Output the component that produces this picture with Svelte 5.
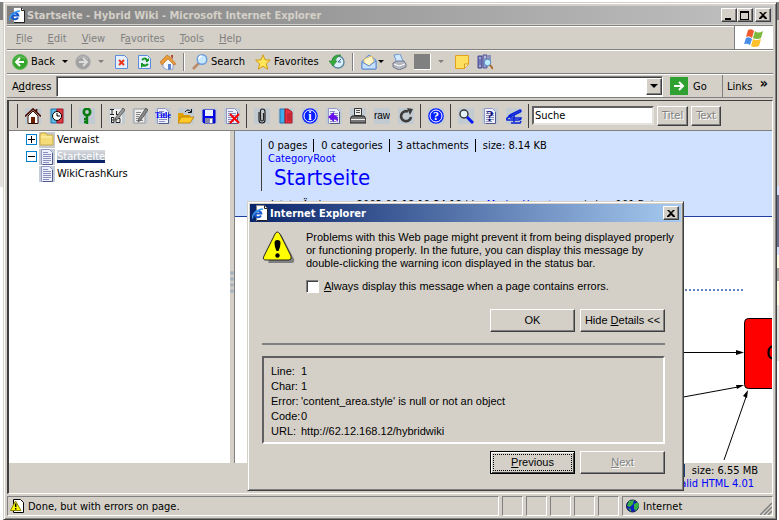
<script>
    let search = $state('Suche');
    let address = $state('');
    let always = $state(false);

    // [before, accelerator, after]
    const menus = [
        ['', 'F', 'ile'],
        ['', 'E', 'dit'],
        ['', 'V', 'iew'],
        ['F', 'a', 'vorites'],
        ['', 'T', 'ools'],
        ['', 'H', 'elp']
    ];

    const tools = [
        ['house', 'clock'],
        ['key'],
        ['ident', 'edit', 'title', 'open', 'save', 'remove'],
        ['clip', 'book', 'info', 'undo', 'print', 'raw', 'reload'],
        ['help'],
        ['find', 'what', 'sign']
    ];

    const details = [
        ['Line:', '1'],
        ['Char:', '1'],
        ['Error:', "'content_area.style' is null or not an object"],
        ['Code:', '0'],
        ['URL:', 'http://62.12.168.12/hybridwiki']
    ];
</script>

{#snippet page()}
    <path d="M2.500 .5h8l3 3v12h-11z" fill="#eef0ff" stroke="#9298c4" />
    <path d="M13.500 4v11.500H4" stroke="#50588c" fill="none" />
    <path d="M4 3.500h5M4 5.500h8M4 7.500h8M4 9.500h8M4 11.500h8M4 13.500h6" stroke="#8a90bc" fill="none" />
{/snippet}

{#snippet icon(name)}
    <svg class="icon" width="16" height="16" viewBox="0 0 16 16" aria-hidden="true">
        {#if name === 'ie'}
            <path d="M4.500 .5h8l3 3v12h-11z" fill="#fff" stroke="#888" />
            <path d="M12.500 .5v3h3v12H5" fill="none" stroke="#222" />
            <path d="M9 10.500A3.300 3.300 0 1 1 9.300 8.500H3.500" fill="none" stroke="#1558d0" stroke-width="2" />
            <path d="M1 13.500C-1 10 5 4 11 4" fill="none" stroke="#3c9cf0" stroke-width="1.300" />
        {:else if name === 'back' || name === 'forward'}
            <circle cx="8" cy="8" r="7.500" fill={name === 'back' ? '#35a52c' : '#a0a0a0'} stroke={name === 'back' ? '#64b85a' : '#bbb'} />
            <path d="M3 5a6 5 0 0 1 10 0" fill="none" stroke="#fff" opacity=".35" />
            <path d={name === 'back' ? 'M8 4L4 8l4 4M4 8h8' : 'M8 4l4 4-4 4M12 8H4'} fill="none" stroke={name === 'back' ? '#fff' : '#ddd'} stroke-width="2" />
        {:else if name === 'stop'}
            <path d="M1.500 1.500h9l3 3v10h-12z" fill="#e4efff" stroke="#5c8cdc" />
            <path d="M5 6l5 5M10 6l-5 5" stroke="#e83418" stroke-width="2" />
        {:else if name === 'refresh'}
            <path d="M1.500 1.500h9l3 3v10h-12z" fill="#e4efff" stroke="#5c8cdc" />
            <path d="M5 6q3-3 5 0v2M11 10q-3 3-6 1V9" stroke="#169425" stroke-width="2" fill="none" />
            <path d="M8 7h4v-3zM4 10v4l4-4z" fill="#169425" />
        {:else if name === 'home'}
            <path d="M3 8l5-5 5 5v7l-6 1-4-3z" fill="#f6f8ff" stroke="#8d9bc8" />
            <path d="M0 8l7-7 3 2 6 7-2 1-6-6-6 6z" fill="#e99b38" stroke="#b86a1c" stroke-width=".6" />
            <path d="M11 1h2v4l-2-2z" fill="#b44a28" /><path d="M8 10h3v5l-3 1z" fill="#5c87d0" />
        {:else if name === 'search'}
            <path d="M1 15l6-6" stroke="#b98b68" stroke-width="2.500" />
            <circle cx="10" cy="5.500" r="4.800" fill="#c8e8ff" stroke="#6a9bda" stroke-width="1.400" />
            <path d="M7 5a3 3 0 0 1 3-3" stroke="#fff" stroke-width="1.500" fill="none" />
        {:else if name === 'star'}
            <path d="M8 .8l2 5 5.300.4-4 3.500 1.400 5.500L8 12.300l-4.700 2.900 1.300-5.500-4-3.500L6 5.800z" fill="#ffe55a" stroke="#d39a10" />
        {:else if name === 'history'}
            <circle cx="9" cy="8" r="6" fill="#d9f0fa" stroke="#5e8698" stroke-width="1.400" />
            <path d="M9 8l3-3M9 8h3" stroke="#3d6890" />
            <path d="M12 1Q4 0 3 7H0l4 5 4-5H6q1-4 6-6z" fill="#35ac3c" stroke="#1f7c2c" stroke-width=".6" />
        {:else if name === 'mail'}
            <path d="M1 7l7-6 7 5v9H1z" fill="#a9cdf6" stroke="#5d8bd0" />
            <path d="M3 5l8-3 2 6-5 4-5-3z" fill="#fff4c8" stroke="#e0b968" />
            <path d="M1 8l7 4 7-5v8H1z" fill="#c6e0ff" stroke="#5d8bd0" />
        {:else if name === 'printer'}
            <path d="M3 1l6-1 3 7-6 2z" fill="#d2e8ff" stroke="#6a98d4" />
            <path d="M2 9l4-2h7l2 3v3l-7 3-6-3z" fill="#b4b7c0" stroke="#74788c" />
            <path d="M3 10l5 2 6-2" stroke="#fff" fill="none" />
        {:else if name === 'note'}
            <path d="M1.500 1.500h13v9l-4 4h-9z" fill="#ffdf60" stroke="#e2a21e" />
            <path d="M10.500 14v-4h4" fill="#fff0ae" stroke="#d89a1a" />
        {:else if name === 'research'}
            <path d="M1 2h4v12H1z" fill="#7378b8" stroke="#464b90" /><path d="M6 1h4v13H6z" fill="#9397cc" stroke="#565b9c" />
            <path d="M2 4h2M7 3h2M2 12h2" stroke="#ddd" /><path d="M11 1h3v8h-3z" fill="#8b91bd" />
            <circle cx="10.500" cy="8.500" r="3.300" fill="#bceaff" stroke="#548cc0" /><path d="M13 11l3 4" stroke="#a86a28" stroke-width="2" />
        {:else if name === 'go'}
            <path d="M0 0h16v16H0z" fill="#2fa032" />
            <path d="M3 8h9M8 4l4 4-4 4" fill="none" stroke="#fff" stroke-width="2" />
        {:else if name === 'warnpage'}
            <path d="M3.500 1.500h7l3 3v10h-10z" fill="#fff" stroke="#000" />
            <path d="M5.500 3l5.500 9.500H.5z" fill="#ff0" stroke="#8a8400" /><path d="M5.700 5.500v3.500M5.700 10v1.500" stroke="#000" stroke-width="1.500" />
        {:else if name === 'globe'}
            <circle cx="7.500" cy="8" r="6" fill="#1020c0" stroke="#101840" />
            <path d="M4 3l5-1-1 4-3 3-3-1zM9 6l4-2 1 4-3 5-2-2zM3 10l3 1 0 3z" fill="#38b044" />
        {:else if name === 'folder'}
            <path d="M0 0h16v16H0z" fill="#c8ccd0" />
            <path d="M1 3l1-2h5l1 2h6v10H1z" fill="#f4dd79" stroke="#c9a94a" /><path d="M2 5h11" stroke="#fff6bd" />
        {:else if name === 'doc'}
            <path d="M0 0h16v16H0z" fill="#c5cdd6" />
            {@render page()}
        {:else}
            <path d="M0 0h16v16H0z" fill="#c3cbd2" />
            {#if name === 'house'}
                <path d="M3 8v7.500h10V8L8 3z" fill="#fff" stroke="#301000" />
                <path d="M0 8.500L8 1l8 7.500M11.500 1v4" fill="none" stroke="#501000" stroke-width="1.700" /><path d="M6 9h4v6H6z" fill="#6b2000" />
            {:else if name === 'clock'}
                <path d="M2 1h6v14H2z" fill="#59b8e8" stroke="#2878a0" /><path d="M8 1h6v14H8z" fill="#e03840" stroke="#a01820" />
                <circle cx="8" cy="8" r="4.500" fill="#fff" stroke="#000" /><path d="M8 5v3h3" stroke="#000" fill="none" />
            {:else if name === 'key'}
                <circle cx="8" cy="4" r="3.200" fill="none" stroke="#087c10" stroke-width="2.600" />
                <path d="M8 7v9M8 11h-3M8 14h-3" stroke="#087c10" stroke-width="2.400" />
            {:else if name === 'ident'}
                <path d="M1 1h12v14H1z" fill="#eee" />
                <path d="M1 1.500h4M3 2v5M1 6.500h4M7.500 7V3M7 6.500h4M2.500 9v5M2 9.500h3v5H2M7 10.500h4v4H7zM2 12h3" stroke="#222" fill="none" />
                <path d="M14 0l2 2-7 9-3 1 1-3z" fill="#999" stroke="#444" stroke-width=".7" />
            {:else if name === 'edit'}
                <path d="M2 1h11v14H2z" fill="#eee" stroke="#999" /><path d="M4 4.500h5M4 6.500h4M4 8.500h3M4 10.500h3M4 12.500h7" stroke="#888" />
                <path d="M14 0l2 2-7 10-3 2 1-4z" fill="#888" stroke="#444" stroke-width=".7" />
            {:else if name === 'title'}
                {@render page()}
                <text x="0" y="10" class="tag-serif">Title</text>
            {:else if name === 'open'}
                <path d="M0 14V5h5l1 2h6v7z" fill="#e0a000" /><path d="M0 15l3-6h13l-4 6z" fill="#ffc928" stroke="#b87800" stroke-width=".8" />
                <path d="M7 4q3-4 6 0M13.500 1v3.500H10" stroke="#111" fill="none" />
            {:else if name === 'save'}
                <path d="M2 2h12v13H3l-1-1z" fill="#0008f0" stroke="#0000b8" /><path d="M4 2h8v6H4z" fill="#eaf1ff" />
                <path d="M4 10h8v5H4z" fill="#88a" /><path d="M9 11h2v4H9z" fill="#fff" />
            {:else if name === 'remove'}
                {@render page()}
                <path d="M6 6l9 9M15 6l-9 9" stroke="#f00" stroke-width="2" />
            {:else if name === 'clip'}
                <path d="M5 4v8q0 3 3 3t3-3V4q0-3-2.500-3T6.500 4v7q0 2 1.500 2t1.500-2V5" fill="none" stroke="#222" stroke-width="1.200" />
            {:else if name === 'book'}
                <path d="M2 1h5v14H2z" fill="#3faef0" stroke="#2c72a0" /><path d="M7 1h3l4 3v11H7z" fill="#e83040" stroke="#a01820" />
                <path d="M9 6h4M9 8h4M9 10h4M9 12h4" stroke="#a81830" />
            {:else if name === 'info' || name === 'help'}
                <circle cx="8" cy="8" r="7.800" fill="#0820ff" /><circle cx="8" cy="8" r="6" fill="none" stroke="#fff" />
                <text x="8" y="12" class="mark" fill="#fff">{name === 'info' ? 'i' : '?'}</text>
            {:else if name === 'undo'}
                {@render page()}
                <path d="M2 9l6-5v3q6 1 3 8 0-4-3-4v3z" fill="#6a10f0" />
            {:else if name === 'print'}
                <path d="M4.500 .5h7v7h-7z" fill="#eee" stroke="#333" /><path d="M6 2.500h4M6 4.500h4" stroke="#555" />
                <path d="M2 8h12l2 3v4H0v-4z" fill="#777" stroke="#222" /><path d="M1 11.500h14" stroke="#eee" />
            {:else if name === 'raw'}
                <text x="8" y="11" class="tag">raw</text>
            {:else if name === 'reload'}
                <path d="M13 9a5 5 0 1 1-3-5.500" fill="none" stroke="#3c3c3c" stroke-width="2.600" /><path d="M9 0l6 1-3 6z" fill="#3c3c3c" />
            {:else if name === 'find'}
                <circle cx="6" cy="6" r="4" fill="#e4f1fb" stroke="#333" stroke-width="1.400" /><path d="M9 9l6 6" stroke="#0818f0" stroke-width="3" />
            {:else if name === 'what'}
                {@render page()}
                <text x="8" y="13" class="mark big" fill="#101080">?</text>
            {:else if name === 'sign'}
                <path d="M5 6.500l9-4.500q2 1 0 2L4 9q-3 0 1-2.500z" fill="none" stroke="#0820d8" stroke-width="1.500" />
                <path d="M3 9q-3 1-2 3h11q3 0 3-2H4M8 7v7M5 15h9l1-2" fill="none" stroke="#0820d8" stroke-width="1.500" />
            {/if}
        {/if}
    </svg>
{/snippet}

<div class="desktop">
    <main class="window">
        <header class="titlebar">
            {@render icon('ie')}
            <h1>Startseite - Hybrid Wiki - Microsoft Internet Explorer</h1>
            <button class="cap" aria-label="Minimize"><svg width="10" height="9"><path d="M1 7h6v2H1z" /></svg></button>
            <button class="cap" aria-label="Maximize"><svg width="10" height="9"><path d="M0 0h9v9H0zM1 2v6h7V2z" fill-rule="evenodd" /></svg></button>
            <button class="cap last" aria-label="Close"><svg width="10" height="9"><path d="M1 1h2l2 2 2-2h2L6 4l3 3v1H7L5 6 3 8H1V7l3-3z" /></svg></button>
        </header>

        <div class="menurow">
            <nav class="menubar">
                {#each menus as [pre, key, post]}
                    <button>{pre}<u>{key}</u>{post}</button>
                {/each}
            </nav>
            <div class="flag">
                <svg width="20" height="18" viewBox="0 0 20 18" aria-hidden="true">
                    <path d="M4 1q4-2 6 1L8 9Q5 6 2 8z" fill="#ee5a2c" /><path d="M11 2q3 3 8 0l-2 7q-4 2-8 0z" fill="#7cb83c" />
                    <path d="M2 9q3-2 6 1l-2 6q-3-2-6-1z" fill="#4a8ee6" /><path d="M9 10q3 2 8 0l-2 7q-5 2-8 0z" fill="#fbc02c" />
                </svg>
            </div>
        </div>

        <div class="toolbar">
            <button class="tool">{@render icon('back')}Back</button>
            <i class="drop"></i>
            <button class="tool" aria-label="Forward">{@render icon('forward')}</button>
            <i class="drop dim"></i>
            <button class="tool wide" aria-label="Stop">{@render icon('stop')}</button>
            <button class="tool" aria-label="Refresh">{@render icon('refresh')}</button>
            <button class="tool" aria-label="Home">{@render icon('home')}</button>
            <i class="rule"></i>
            <button class="tool">{@render icon('search')}Search</button>
            <button class="tool wide">{@render icon('star')}Favorites</button>
            <button class="tool wide" aria-label="History">{@render icon('history')}</button>
            <i class="rule"></i>
            <button class="tool" aria-label="Mail">{@render icon('mail')}</button>
            <i class="drop tight"></i>
            <button class="tool" aria-label="Print">{@render icon('printer')}</button>
            <i class="blank"></i>
            <i class="drop dim"></i>
            <button class="tool wide" aria-label="Discuss">{@render icon('note')}</button>
            <button class="tool" aria-label="Research">{@render icon('research')}</button>
        </div>

        <div class="addressbar">
            <label for="address">A<u>d</u>dress</label>
            <div class="combo">
                <input id="address" type="text" bind:value={address} />
                <button class="arrow" aria-label="Show addresses"><i class="drop"></i></button>
            </div>
            <button class="go"><span class="goicon">{@render icon('go')}</span>Go</button>
            <div class="links">Links <b>»</b></div>
        </div>

        <div class="view">
            <div class="wikibar">
                {#each tools as group}
                    <div class="group" class:dense={group.length === 6}>
                        {#each group as name}
                            <button class="tool" aria-label={name}>{@render icon(name)}</button>
                        {/each}
                    </div>
                {/each}
                <form class="group find" onsubmit={(e) => e.preventDefault()}>
                    <input type="text" aria-label="Suche" bind:value={search} />
                    <button class="btn small" disabled>Titel</button>
                    <button class="btn small" disabled>Text</button>
                </form>
            </div>

            <div class="panes">
                <ul class="tree">
                    <li><i class="box plus"></i>{@render icon('folder')}<a href="#verwaist">Verwaist</a></li>
                    <li><i class="box"></i>{@render icon('doc')}<a class="selected" href="#startseite">Startseite</a></li>
                    <li><i class="nobox"></i>{@render icon('doc')}<a href="#wikicrashkurs">WikiCrashKurs</a></li>
                </ul>
                <div class="splitter"><i></i><i></i><i></i><i></i></div>
                <article>
                    <header class="pagehead">
                        <div class="bar">
                            <div class="facts"><span>0 pages</span><span>0 categories</span><span>3 attachments</span><span>size: 8.14 KB</span></div>
                            <a href="#category">CategoryRoot</a>
                            <h2>Startseite</h2>
                        </div>
                        <p>letzte Änderung: 2003-09-18 19:34:18 | by <a href="#user">MarkusHauptmann</a> | size: 101 Bytes</p>
                    </header>
                    <svg class="graph" width="94" height="246" viewBox="0 0 94 246" aria-hidden="true">
                        <path d="M7 73h60" stroke="#6080c0" stroke-width="2" stroke-dasharray="2 2" />
                        <rect x="66.500" y="101.500" width="80" height="70" rx="4" fill="#f00" stroke="#000" />
                        <text x="88" y="143" class="node">C</text>
                        <path d="M0 135.500h60M0 181l60-11M46 243l22-63" stroke="#000" fill="none" />
                        <path d="M66 135.500l-8-2.500v5zM66 168l-8 0 1 4zM70 173l-5 6 4 2z" />
                    </svg>
                </article>
            </div>

            <footer>
                <p><span>size: 6.55 MB</span></p>
                <a href="#valid">Valid HTML 4.01</a>
            </footer>
        </div>

        <div class="status">
            <div class="cell grow">{@render icon('warnpage')}Done, but with errors on page.</div>
            {#each [1, 2, 3, 4, 5] as n (n)}
                <div class="cell slot"></div>
            {/each}
            <div class="cell zone">
                {@render icon('globe')}Internet
                <svg class="grip" width="12" height="12" aria-hidden="true"><path d="M0 12L12 0M4 12l8-8M8 12l4-4" stroke="#808080" stroke-width="1.500" /></svg>
            </div>
        </div>
    </main>

    <div class="dialog" role="dialog" aria-labelledby="dlg-title">
        <header class="titlebar active">
            {@render icon('ie')}
            <h1 id="dlg-title">Internet Explorer</h1>
            <button class="cap last" aria-label="Close"><svg width="10" height="9"><path d="M1 1h2l2 2 2-2h2L6 4l3 3v1H7L5 6 3 8H1V7l3-3z" /></svg></button>
        </header>
        <div class="body">
            <div class="message">
                <svg class="icon" width="34" height="34" viewBox="0 0 34 34" aria-hidden="true">
                    <path d="M17 4q2-1 3 1l12 23q1 4-2 4H6z" fill="#808080" />
                    <path d="M13 3q2-4 5 0l11 22q1 4-2 4H4q-4 0-2-4z" fill="#ff0" stroke="#222" />
                    <path d="M12.500 12q0-3 3-3t3 3q0 4-2 8h-2q-2-4-2-8z" /><circle cx="15.500" cy="24.500" r="2.200" />
                </svg>
                <div>
                    <p>
                        Problems with this Web page might prevent it from being displayed properly<br />
                        or functioning properly. In the future, you can display this message by<br />
                        double-clicking the warning icon displayed in the status bar.
                    </p>
                    <label class="check"><input type="checkbox" bind:checked={always} /><span><u>A</u>lways display this message when a page contains errors.</span></label>
                </div>
            </div>
            <div class="buttons top">
                <button class="btn">OK</button>
                <button class="btn">Hide <u>D</u>etails &lt;&lt;</button>
            </div>
            <hr />
            <dl>
                {#each details as [term, text]}
                    <dt>{term}</dt>
                    <dd>{text}</dd>
                {/each}
            </dl>
            <div class="buttons">
                <button class="btn default"><span><u>P</u>revious</span></button>
                <button class="btn" disabled><u>N</u>ext</button>
            </div>
        </div>
    </div>
</div>

<style>
    :global(body) {
        margin: 0;
        background: #d4d0c8;
    }
    * {
        box-sizing: border-box;
    }
    /* slivers of the windows behind show at both sides */
    .desktop {
        position: relative;
        display: flex;
        min-height: 100vh;
        padding: 2px 2px 2px 3px;
        background:
            linear-gradient(#fff 2px, #808080 2px, #808080 20px, #d4d0c8 20px, #d4d0c8 186px, #d0e0ff 186px, #d0e0ff 195px, #68708c 195px, #68708c 247px, #d0e0ff 247px, #d0e0ff 255px, #fffce0 255px, #fffce0 268px, #a0a0a0 268px, #a0a0a0 281px, #fffce0 281px, #fffce0 305px, #e4e2dc 305px, #e4e2dc 361px, #fff 361px) right / 2px 100% no-repeat,
            linear-gradient(#fff 2px, #808080 2px, #808080 20px, #e4e2dc 20px, #e4e2dc 187px, #fff 187px);
        font: 11px/13px "DejaVu Sans Condensed", "DejaVu Sans", sans-serif;
        color: #000;
    }
    h1, h2, p, ul, dl, dd {
        margin: 0;
        padding: 0;
    }
    button {
        font: inherit;
        color: inherit;
        background: none;
        border: 0;
        padding: 0;
        white-space: nowrap;
    }
    a {
        color: #00f;
        text-decoration: none;
    }
    .icon {
        display: block;
        flex: none;
    }

    /* raised frame shared by the window and the dialog */
    .window, .dialog {
        display: flex;
        flex-direction: column;
        background: #d4d0c8;
        border: 1px solid;
        border-color: #d4d0c8 #404040 #404040 #d4d0c8;
        box-shadow: inset 1px 1px #fff, inset -1px -1px #808080;
    }
    .window {
        flex: 1;
        min-width: 0;
        padding: 3px;
    }
    .titlebar {
        display: flex;
        align-items: center;
        height: 18px;
        padding: 0 2px;
        background: linear-gradient(90deg, #808080, #c0c0c0);
        color: #d4d0c8;
    }
    .titlebar.active {
        background: linear-gradient(90deg, #0a246a, #a6caf0);
        color: #fff;
    }
    h1 {
        flex: 1;
        padding-left: 2px;
        font-size: 11px;
        font-weight: 700;
        white-space: nowrap;
    }
    .cap {
        display: grid;
        place-items: center;
        width: 16px;
        height: 14px;
    }
    .cap.last {
        margin-left: 2px;
    }
    .cap, .btn, .arrow {
        background: #d4d0c8;
        color: #000;
        border: 1px solid;
        border-color: #fff #404040 #404040 #fff;
        box-shadow: inset -1px -1px #808080;
    }

    .menurow {
        display: flex;
        height: 25px;
        margin-top: 1px;
        border: solid #808080;
        border-width: 1px 0;
        box-shadow: inset 0 1px #fff, 0 1px #fff;
    }
    .menubar {
        display: flex;
        flex: 1;
        gap: 15px;
        padding: 1px 0 0 9px;
        color: #808080;
    }
    .flag {
        display: grid;
        place-items: center;
        width: 39px;
        background: #fff;
        border-left: 1px solid #808080;
    }
    .toolbar {
        display: flex;
        align-items: center;
        gap: 7px;
        height: 24px;
        padding-left: 5px;
        border-bottom: 1px solid #808080;
    }
    .tool {
        display: flex;
        align-items: center;
        gap: 3px;
    }
    .wide {
        margin-left: 3px;
    }
    .drop {
        border: solid transparent;
        border-width: 3px 3px 0;
        border-top-color: #000;
    }
    .dim {
        border-top-color: #808080;
    }
    .tight {
        margin-left: -6px;
    }
    .rule {
        width: 2px;
        height: 18px;
        background: #808080;
        border-right: 1px solid #fff;
    }
    .blank {
        width: 17px;
        height: 16px;
        background: #808080;
        border: solid #fff;
        border-width: 0 1px 1px 0;
    }

    .addressbar {
        display: flex;
        align-items: center;
        height: 24px;
        padding-left: 5px;
        border-top: 1px solid #fff;
        border-bottom: 1px solid #808080;
    }
    .addressbar label {
        padding-right: 5px;
    }
    .combo {
        display: flex;
        flex: 1;
        height: 21px;
        background: #fff;
        border: 1px solid;
        border-color: #808080 #fff #fff #808080;
        box-shadow: inset 1px 1px #404040;
    }
    .combo input {
        flex: 1;
        min-width: 0;
        border: 0;
        background: none;
        font: inherit;
        outline: 0;
    }
    .arrow {
        display: grid;
        place-items: center;
        width: 16px;
        margin: 1px 0;
    }
    .arrow .drop {
        border-width: 4px 4px 0;
    }
    .go {
        display: flex;
        align-items: center;
        gap: 5px;
        width: 59px;
        padding-left: 7px;
    }
    .goicon {
        padding: 1px;
        background: #2fa032;
    }
    .links {
        display: flex;
        justify-content: space-between;
        align-items: center;
        width: 51px;
        height: 100%;
        padding: 0 5px 0 4px;
        border-left: 1px solid #808080;
    }
    .links b {
        font-size: 14px;
        padding-bottom: 6px;
    }

    .view {
        display: flex;
        flex: 1;
        flex-direction: column;
        margin-top: 2px;
        border: 1px solid;
        border-color: #404040 #fff #fff #404040;
        border-left-width: 2px;
    }
    .wikibar {
        display: flex;
        align-items: center;
        height: 30px;
        padding-left: 8px;
        border-bottom: 1px solid #808080;
    }
    .group {
        display: flex;
        align-items: center;
        gap: 8px;
        height: 24px;
        padding: 0 6px 0 7px;
        border-left: 1px solid #404040;
    }
    .group.dense {
        gap: 7px;
    }
    .find {
        gap: 3px;
        padding: 0 0 0 3px;
    }
    .find input {
        width: 122px;
        height: 19px;
        padding: 0 1px;
        border: 2px solid;
        border-color: #606060 #e4e2dc #e4e2dc #606060;
        border-radius: 0;
        font: inherit;
    }
    .tag, .tag-serif {
        font: 10px "Liberation Sans", sans-serif;
        text-anchor: middle;
    }
    .tag-serif {
        font: 700 8px "Liberation Serif", serif;
        text-anchor: start;
        fill: #00f;
    }
    .mark {
        font: 700 12px "Liberation Serif", serif;
        text-anchor: middle;
    }
    .mark.big {
        font-size: 15px;
    }
    .panes {
        display: flex;
        flex: 1;
        background: #fff;
    }
    .tree {
        width: 221px;
        padding-left: 17px;
        list-style: none;
    }
    .tree li {
        display: flex;
        align-items: center;
        gap: 2px;
        height: 17px;
    }
    .tree a {
        color: #000;
    }
    .tree a.selected {
        color: #fff;
        background: linear-gradient(#d8dade, #aab4c0 80%, #0a246a 80%);
    }
    .box, .nobox {
        width: 11px;
        height: 11px;
    }
    .box {
        border: 1px solid #0080d0;
        background: linear-gradient(#000, #000) center / 7px 1px no-repeat;
    }
    .plus {
        background: linear-gradient(#000, #000) center / 7px 1px no-repeat, linear-gradient(#000, #000) center / 1px 7px no-repeat;
    }
    .splitter {
        display: flex;
        flex-direction: column;
        justify-content: center;
        align-items: center;
        gap: 2px;
        width: 5px;
        padding-bottom: 30px;
        background: #d4d0c8;
        border-right: 1px solid #808080;
    }
    .splitter i {
        width: 4px;
        height: 4px;
        border-radius: 2px;
        background: #a8b4c0;
    }
    article {
        flex: 1;
        min-width: 0;
    }
    .pagehead {
        height: 86px;
        padding: 8px 0 0 26px;
        overflow: hidden;
        background: #d0e0ff;
        border-bottom: 1px solid #2040a0;
    }
    .bar {
        padding-left: 6px;
        border-left: 1px solid #404040;
    }
    .facts {
        display: flex;
    }
    .facts span + span {
        margin-left: 6px;
        padding-left: 7px;
        border-left: 1px solid #000;
    }
    h2 {
        padding-left: 6px;
        font-size: 22px;
        line-height: 26px;
        font-weight: 400;
        color: #00f;
    }
    .pagehead p {
        padding: 7px 0 0 10px;
        white-space: nowrap;
    }
    .graph {
        display: block;
        margin-left: auto;
    }
    .node {
        font: 22px "Liberation Sans", sans-serif;
    }
    footer {
        height: 30px;
        padding: 1px 14px 0 0;
        text-align: right;
    }
    footer span {
        padding-left: 7px;
        border-left: 1px solid #204080;
    }
    footer a {
        padding-right: 4px;
    }

    .status {
        display: flex;
        gap: 3px;
        height: 22px;
        padding-top: 2px;
    }
    .cell {
        display: flex;
        align-items: center;
        gap: 2px;
        border: 1px solid;
        border-color: #808080 #fff #fff #808080;
    }
    .grow {
        flex: 1;
        padding-left: 2px;
    }
    .slot {
        width: 21px;
    }
    .zone {
        width: 151px;
        padding-left: 2px;
    }
    .grip {
        align-self: end;
        margin-left: auto;
    }

    .dialog {
        position: absolute;
        left: 247px;
        top: 201px;
        width: 437px;
        padding: 2px;
        font: 11px/13px "Liberation Sans", Arial, sans-serif;
    }
    .dialog h1 {
        font-family: "DejaVu Sans Condensed", sans-serif;
    }
    .body {
        padding: 9px 16px 14px 12px;
    }
    .message {
        display: flex;
        gap: 10px;
        white-space: nowrap;
    }
    .check {
        display: flex;
        align-items: center;
        gap: 5px;
        padding-top: 10px;
    }
    .check input {
        appearance: none;
        width: 13px;
        height: 13px;
        margin: 0;
        background: #fff;
        border: 1px solid;
        border-color: #808080 #fff #fff #808080;
        box-shadow: inset 1px 1px #404040;
    }
    .buttons {
        display: flex;
        justify-content: flex-end;
        gap: 5px;
    }
    .buttons.top {
        padding-top: 16px;
    }
    .btn {
        width: 85px;
        height: 23px;
    }
    .btn.small {
        width: auto;
        height: 20px;
        padding: 0 4px;
    }
    .btn:disabled {
        color: #808080;
        text-shadow: 1px 1px #fff;
    }
    .btn.default {
        padding: 2px;
        border-color: #000;
        box-shadow: inset 1px 1px #fff, inset -1px -1px #404040;
    }
    .default span {
        display: block;
        border: 1px dotted #000;
        line-height: 15px;
    }
    hr {
        margin: 11px 0;
        border: solid;
        border-width: 1px 0;
        border-color: #808080 #fff;
    }
    dl {
        display: grid;
        grid-template-columns: 30px 1fr;
        margin-bottom: 7px;
        padding: 6px 7px 3px;
        border: 2px solid;
        border-color: #606060 #fff #fff #606060;
        line-height: 15px;
    }
</style>
